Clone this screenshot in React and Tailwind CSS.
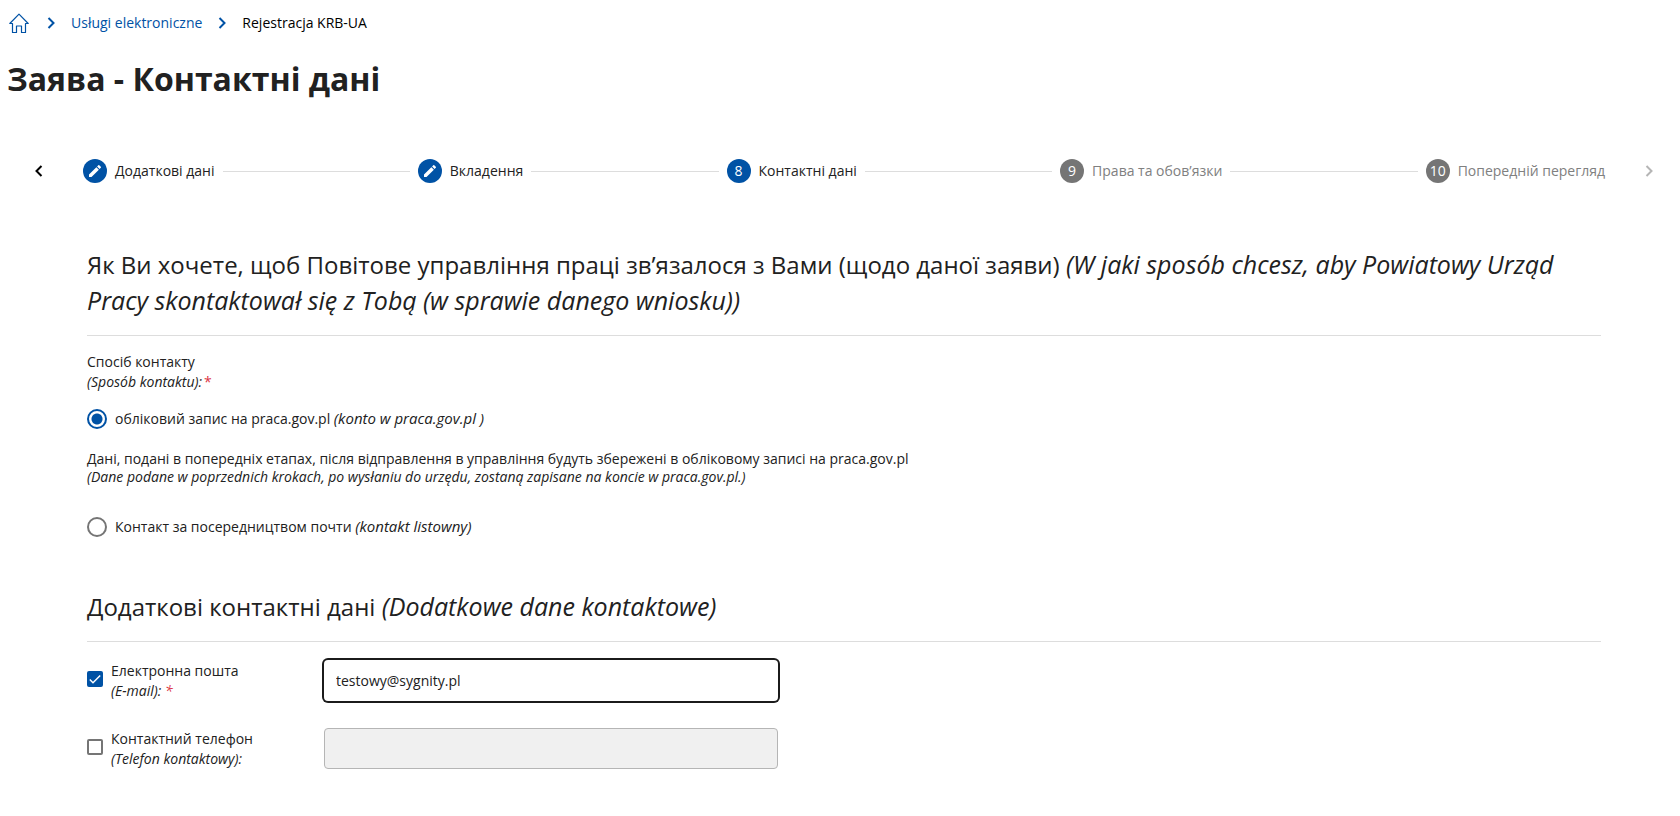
import React, { useState } from "react";
import { MdEdit } from "react-icons/md";

const steps = [
  { number: 6, label: "Додаткові дані", state: "done" },
  { number: 7, label: "Вкладення", state: "done" },
  { number: 8, label: "Контактні дані", state: "current" },
  { number: 9, label: "Права та обов’язки", state: "next" },
  { number: 10, label: "Попередній перегляд", state: "next" },
];

function Chevron({ className, left }) {
  return (
    <svg viewBox="0 0 8 12" width="8" height="12" fill="none" stroke="currentColor" strokeWidth="2" className={className} aria-hidden="true">
      <path d={left ? "M6.5 1 1.5 6l5 5" : "M1.5 1l5 5-5 5"} />
    </svg>
  );
}

function HomeIcon() {
  return (
    <svg viewBox="0 0 20 20" width="20" height="20" fill="none" stroke="currentColor" strokeWidth="1.2" aria-hidden="true">
      <path d="M.8 10.5 10 1.200l9.200 9.300H16.500v9h-4v-6.500h-5v6.500h-4v-9z" strokeLinejoin="round" />
    </svg>
  );
}

function Step({ step }) {
  const active = step.state !== "next";
  return (
    <button type="button" className="flex items-center gap-2 whitespace-nowrap" aria-current={step.state === "current" ? "step" : undefined}>
      <span className={`flex h-6 w-6 items-center justify-center rounded-full text-white ${active ? "bg-[#0052a5]" : "bg-[#757575]"}`}>
        {step.state === "done" ? <MdEdit size={16} /> : step.number}
      </span>
      <span className={active ? "text-[#212121]" : "text-[#808080]"}>{step.label}</span>
    </button>
  );
}

function SectionTitle({ children, pl }) {
  return (
    <h2 className="border-b border-[#dddddd] pb-4 text-2xl leading-9">
      {children} <em className="text-[25px] leading-none">{pl}</em>
    </h2>
  );
}

function RadioOption({ id, value, selected, onSelect, label, pl }) {
  return (
    <label htmlFor={id} className="flex h-[22px] items-center gap-2">
      <input
        id={id}
        type="radio"
        name="contact"
        value={value}
        checked={selected === value}
        onChange={() => onSelect(value)}
        className="h-5 w-5 shrink-0 appearance-none rounded-full border-2 border-[#757575] checked:border-[#0052a5] checked:bg-[radial-gradient(circle,#0052a5_5px,transparent_6px)]"
      />
      <span>
        {label} <em className="text-[15px] leading-none">{pl}</em>
      </span>
    </label>
  );
}

function ContactField({ id, label, pl, required, checked, onToggle, type, value, onChange }) {
  return (
    <div className="flex h-[45px] items-center">
      <div className="flex w-[237px] shrink-0 items-start gap-2">
        <span className="relative mt-2.5 h-4 w-4 shrink-0">
          <input
            id={`${id}-on`}
            type="checkbox"
            checked={checked}
            onChange={onToggle}
            className="block h-4 w-4 appearance-none rounded-xs border-2 border-[#757575] checked:border-[#0052a5] checked:bg-[#0052a5]"
          />
          {checked && (
            <svg viewBox="0 0 16 16" className="pointer-events-none absolute inset-0 h-4 w-4" fill="none" stroke="white" strokeWidth="1.5" aria-hidden="true">
              <path d="M2.800 8.500 6 11.700 13.200 4.500" />
            </svg>
          )}
        </span>
        <label htmlFor={`${id}-on`} className="leading-5">
          <span className="block">{label}</span>
          <em className="block">
            {pl} {required && <span className="text-[#dc3545]">*</span>}
          </em>
        </label>
      </div>
      <input
        id={id}
        type={type}
        aria-label={label}
        disabled={!checked}
        value={value}
        onChange={(e) => onChange(e.target.value)}
        className="h-[41px] w-[30%] rounded-sm bg-white px-3 text-[#212121] ring-2 ring-[#1b1b1b] outline-none disabled:border disabled:border-[#b5b5b5] disabled:bg-[#f0f0f0] disabled:ring-0"
      />
    </div>
  );
}

export default function App() {
  const [contact, setContact] = useState("account");
  const [useEmail, setUseEmail] = useState(true);
  const [usePhone, setUsePhone] = useState(false);
  const [email, setEmail] = useState("testowy@sygnity.pl");
  const [phone, setPhone] = useState("");

  return (
    <div className="min-h-screen bg-white font-['Open_Sans',sans-serif] text-sm text-[#212121]">
      {/* Breadcrumbs */}
      <nav className="flex h-[46px] items-center pl-[9px] text-[#0052a5]">
        <a href="#" aria-label="Home">
          <HomeIcon />
        </a>
        <Chevron className="ml-[18px] mr-4" />
        <a href="#">Usługi elektroniczne</a>
        <Chevron className="mx-4" />
        <span className="text-black">Rejestracja KRB-UA</span>
      </nav>

      <h1 className="mt-[9px] px-[7px] text-[32px] leading-[48px] font-bold">Заява - Контактні дані</h1>

      {/* Stepper */}
      <div className="mt-11 flex h-12 items-center pr-[27px] pl-[35px]">
        <button type="button" aria-label="Назад">
          <Chevron left className="text-black" />
        </button>
        <div className="mx-10 flex flex-1 items-center gap-2">
          {steps.map((step, i) => (
            <React.Fragment key={step.number}>
              {i > 0 && <span className="h-px flex-1 bg-[#dddddd]" />}
              <Step step={step} />
            </React.Fragment>
          ))}
        </div>
        <button type="button" aria-label="Далі">
          <Chevron className="text-[#b5b5b5]" />
        </button>
      </div>

      <main className="mt-[52px] pr-[79px] pb-11 pl-[87px]">
        <SectionTitle pl="(W jaki sposób chcesz, aby Powiatowy Urząd Pracy skontaktował się z Tobą (w sprawie danego wniosku))">
          Як Ви хочете, щоб Повітове управління праці зв’язалося з Вами (щодо даної заяви)
        </SectionTitle>

        <fieldset className="mt-4">
          <legend className="leading-5">
            Спосіб контакту
            <em className="block">
              (Sposób kontaktu):<span className="ml-0.5 text-[#dc3545] not-italic">*</span>
            </em>
          </legend>
          <div className="mt-4">
            <RadioOption id="contact-account" value="account" selected={contact} onSelect={setContact} label="обліковий запис на praca.gov.pl" pl="(konto w praca.gov.pl )" />
          </div>
          <p className="mt-5 leading-[18px]">
            Дані, подані в попередніх етапах, після відправлення в управління будуть збережені в обліковому записі на praca.gov.pl
            <em className="block">
              (Dane podane w poprzednich krokach, po wysłaniu do urzędu, zostaną zapisane na koncie w praca.gov.pl.)
            </em>
          </p>
          <div className="mt-[30px]">
            <RadioOption id="contact-post" value="post" selected={contact} onSelect={setContact} label="Контакт за посередництвом почти" pl="(kontakt listowny)" />
          </div>
        </fieldset>

        <section className="mt-[51px]">
          <SectionTitle pl="(Dodatkowe dane kontaktowe)">Додаткові контактні дані</SectionTitle>
          <div className="mt-4 flex flex-col gap-[23px]">
            <ContactField
              id="email"
              type="email"
              label="Електронна пошта"
              pl="(E-mail):"
              required
              checked={useEmail}
              onToggle={() => setUseEmail(!useEmail)}
              value={email}
              onChange={setEmail}
            />
            <ContactField
              id="phone"
              type="tel"
              label="Контактний телефон"
              pl="(Telefon kontaktowy):"
              checked={usePhone}
              onToggle={() => setUsePhone(!usePhone)}
              value={phone}
              onChange={setPhone}
            />
          </div>
        </section>
      </main>
    </div>
  );
}
